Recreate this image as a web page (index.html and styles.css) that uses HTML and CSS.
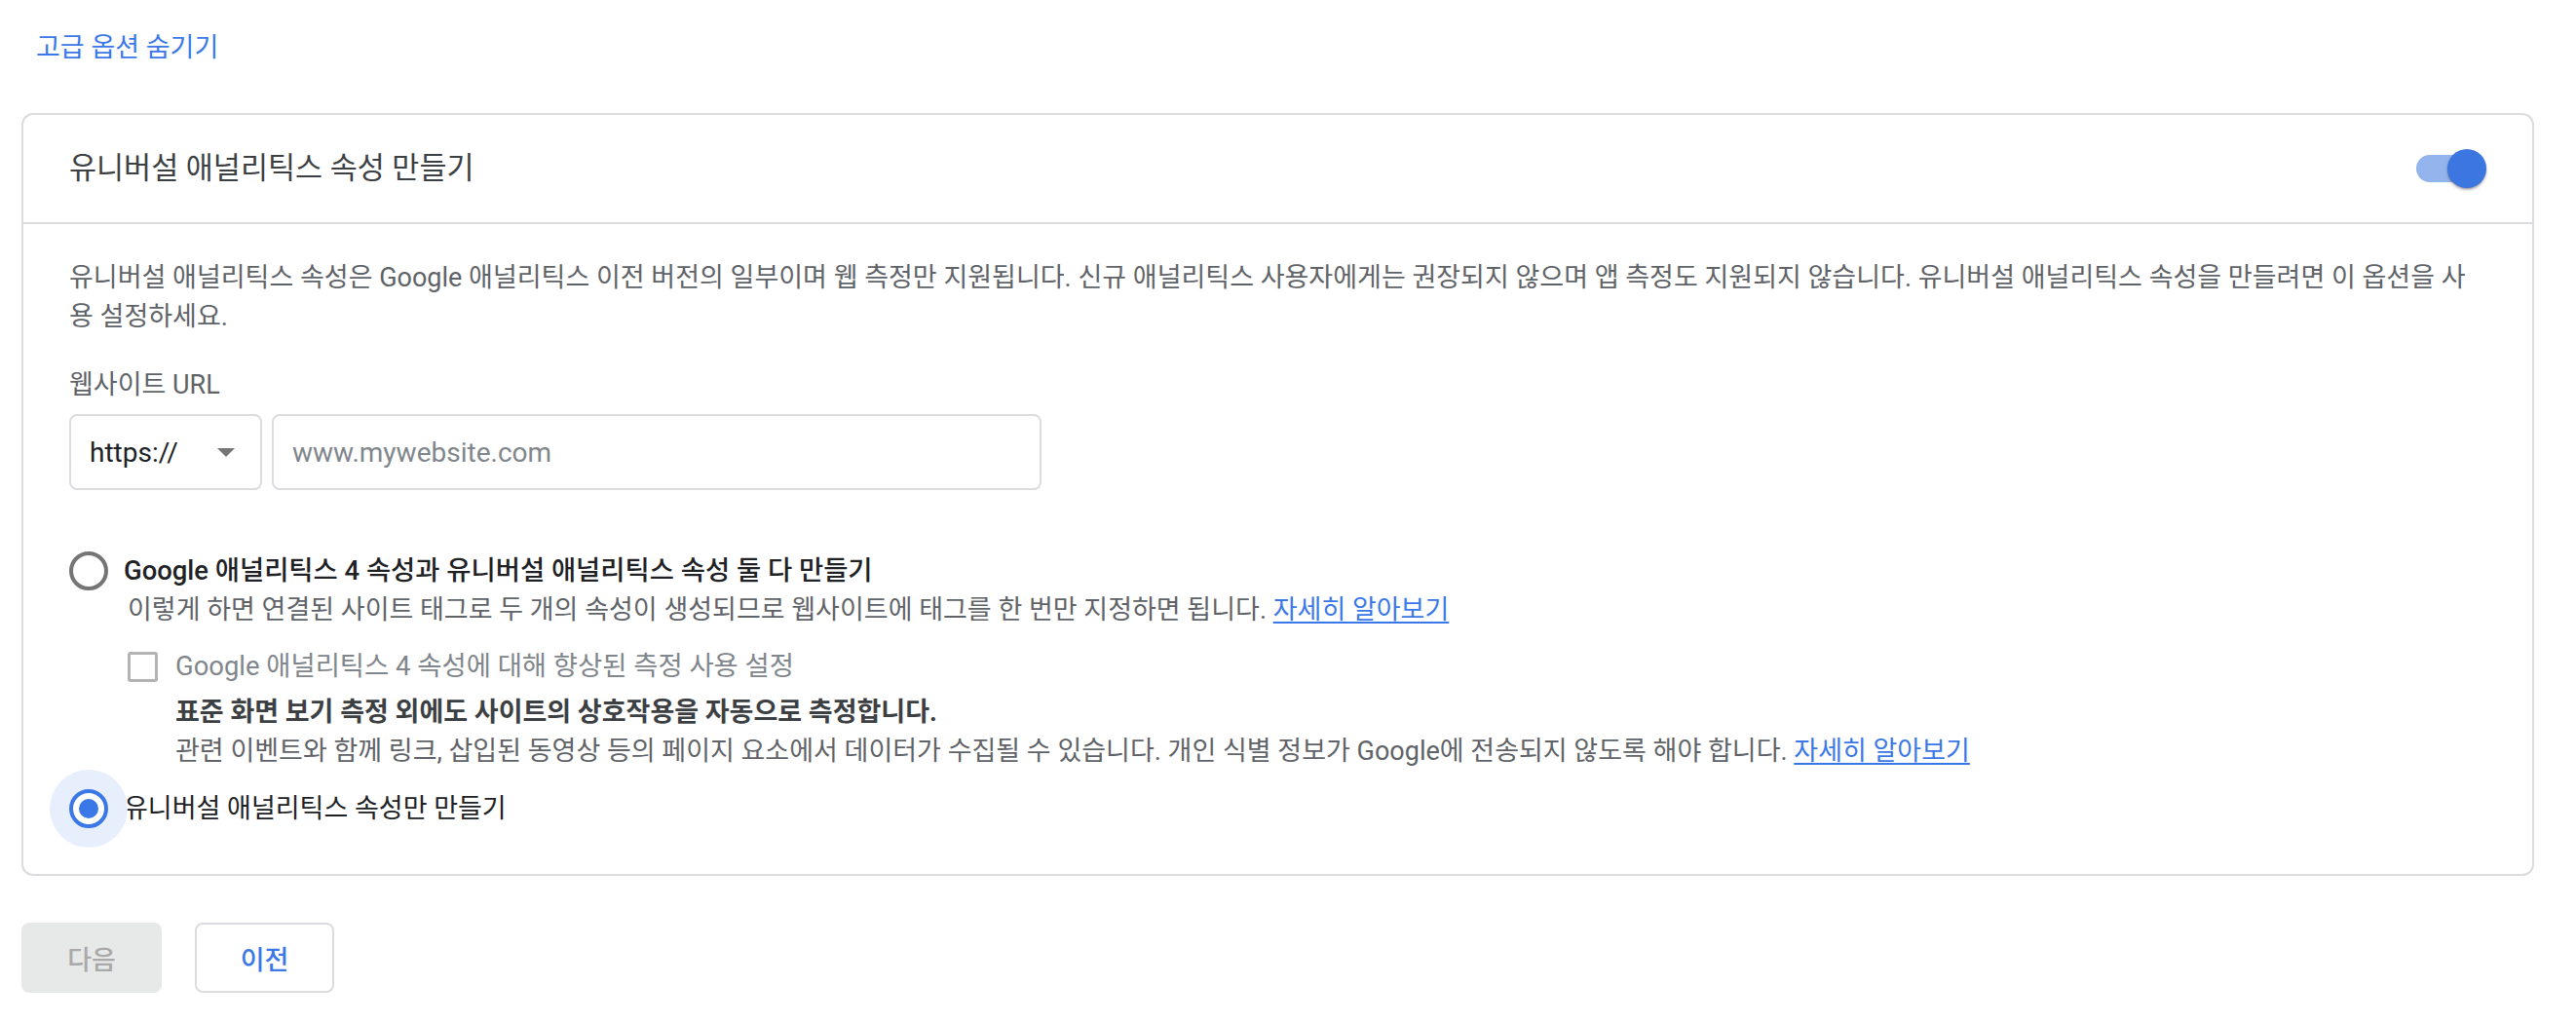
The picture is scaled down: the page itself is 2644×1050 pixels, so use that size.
FILE: index.html
```html
<!DOCTYPE html>
<html lang="ko">
<head>
<meta charset="utf-8">
<title>유니버설 애널리틱스 속성 만들기</title>
<link rel="stylesheet" href="styles.css">
</head>
<body>
<div class="page">
  <a class="adv-link" href="#">고급 옵션 숨기기</a>

  <section class="card">
    <header class="card-head">
      <h2 class="card-title">유니버설 애널리틱스 속성 만들기</h2>
      <span class="switch" role="switch" aria-checked="true">
        <span class="switch-track"></span>
        <span class="switch-thumb"></span>
      </span>
    </header>

    <div class="card-body">
      <p class="intro">유니버설 애널리틱스 속성은 Google 애널리틱스 이전 버전의 일부이며 웹 측정만 지원됩니다. 신규 애널리틱스 사용자에게는 권장되지 않으며 앱 측정도 지원되지 않습니다. 유니버설 애널리틱스 속성을 만들려면 이 옵션을 사용 설정하세요.</p>

      <label class="field-label">웹사이트 URL</label>
      <div class="url-row">
        <div class="select">
          <span class="select-value">https://</span>
          <svg class="select-arrow" width="18" height="9" viewBox="0 0 18 9"><path d="M0 0h18L9 9z"/></svg>
        </div>
        <div class="url-input"><span class="placeholder">www.mywebsite.com</span></div>
      </div>

      <div class="options">
        <div class="option">
          <span class="radio"></span>
          <span class="option-label strong-label">Google 애널리틱스 4 속성과 유니버설 애널리틱스 속성 둘 다 만들기</span>
        </div>
        <p class="option-desc">이렇게 하면 연결된 사이트 태그로 두 개의 속성이 생성되므로 웹사이트에 태그를 한 번만 지정하면 됩니다. <a href="#" class="learn">자세히 알아보기</a></p>

        <div class="check-row">
          <span class="checkbox"></span>
          <span class="check-label">Google 애널리틱스 4 속성에 대해 향상된 측정 사용 설정</span>
        </div>
        <div class="check-desc">
          <p class="check-strong">표준 화면 보기 측정 외에도 사이트의 상호작용을 자동으로 측정합니다.</p>
          <p class="check-text">관련 이벤트와 함께 링크, 삽입된 동영상 등의 페이지 요소에서 데이터가 수집될 수 있습니다. 개인 식별 정보가 Google에 전송되지 않도록 해야 합니다. <a href="#" class="learn">자세히 알아보기</a></p>
        </div>

        <div class="option option-last">
          <span class="radio checked"></span>
          <span class="option-label">유니버설 애널리틱스 속성만 만들기</span>
        </div>
      </div>
    </div>
  </section>

  <div class="actions">
    <button class="btn btn-next" disabled>다음</button>
    <button class="btn btn-prev">이전</button>
  </div>
</div>
</body>
</html>
```
FILE: styles.css
```css
html, body {
  margin: 0;
  background: #ffffff;
}

body {
  font-family: Roboto, "Noto Sans CJK KR", sans-serif;
  color: #202124;
}

.page {
  padding: 31px 43px 0 22px;
}

.adv-link {
  display: block;
  margin-left: 15px;
  font-size: 27px;
  line-height: 36px;
  color: #3b78e7;
  text-decoration: none;
}

.card {
  margin-top: 49px;
  border: 2px solid #dadce0;
  border-radius: 12px;
}

.card-head {
  height: 110px;
  padding: 0 47px;
  display: flex;
  align-items: center;
  justify-content: space-between;
  border-bottom: 2px solid #dadce0;
}

.card-title {
  margin: 0;
  font-size: 30.5px;
  font-weight: 400;
  line-height: 40px;
  color: #3c4043;
}

.switch {
  position: relative;
  display: block;
  width: 72px;
  height: 40px;
  flex: none;
}

.switch-track {
  position: absolute;
  left: 0;
  top: 6px;
  width: 68px;
  height: 28px;
  border-radius: 14px;
  background: #94b4ee;
}

.switch-thumb {
  position: absolute;
  left: 32px;
  top: 0;
  width: 40px;
  height: 40px;
  border-radius: 50%;
  background: #3b76e1;
  box-shadow: 0 2px 3px rgba(0, 0, 0, 0.28), 0 1px 1px rgba(0, 0, 0, 0.12);
}

.card-body {
  padding: 35px 47px 47px;
}

.intro {
  margin: 0;
  font-size: 27px;
  line-height: 40px;
  color: #5f6368;
}

.field-label {
  display: block;
  margin-top: 30px;
  font-size: 27px;
  line-height: 40px;
  color: #5f6368;
}

.url-row {
  display: flex;
  gap: 10px;
  margin-top: 10px;
}

.select,
.url-input {
  box-sizing: border-box;
  height: 78px;
  border: 2px solid #dadce0;
  border-radius: 8px;
  display: flex;
  align-items: center;
  font-size: 28px;
}

.select {
  width: 198px;
  padding: 0 26px 0 19px;
  justify-content: space-between;
}

.select-value {
  color: #202124;
}

.select-arrow {
  fill: #757575;
  display: block;
}

.url-input {
  width: 790px;
  padding-left: 19px;
}

.placeholder {
  color: #80868b;
}

.options {
  margin-top: 63px;
  font-size: 27px;
}

.option {
  display: flex;
  align-items: center;
  gap: 16px;
  height: 40px;
  line-height: 40px;
}

.option-last {
  margin-top: 19px;
}

.option-label {
  color: #202124;
}

.strong-label {
  font-weight: 500;
  font-size: 27.4px;
}

.radio {
  position: relative;
  flex: none;
  box-sizing: border-box;
  width: 40px;
  height: 40px;
  border: 4px solid #757575;
  border-radius: 50%;
}

.radio.checked {
  border-color: #3b78e7;
  box-shadow: 0 0 0 20px #e8effc;
}

.radio.checked::after {
  content: "";
  position: absolute;
  left: 6px;
  top: 6px;
  width: 20px;
  height: 20px;
  border-radius: 50%;
  background: #3b78e7;
}

.option-desc {
  margin: 0 0 0 60px;
  line-height: 40px;
  color: #5f6368;
}

.learn {
  color: #3b78e7;
  text-decoration: underline;
  text-underline-offset: 3px;
}

.check-row {
  display: flex;
  align-items: center;
  gap: 18px;
  height: 40px;
  margin: 18px 0 0 60px;
}

.checkbox {
  flex: none;
  box-sizing: border-box;
  width: 31px;
  height: 31px;
  border: 3px solid #b3b3b3;
  border-radius: 3px;
}

.check-label {
  font-size: 27.4px;
  line-height: 40px;
  color: #80868b;
}

.check-desc {
  margin: 7px 0 0 109px;
}

.check-desc p {
  margin: 0;
  line-height: 40px;
}

.check-strong {
  font-weight: 700;
  color: #3c4043;
}

.check-text {
  color: #5f6368;
}

.actions {
  display: flex;
  gap: 34px;
  margin-top: 48px;
}

.btn {
  box-sizing: border-box;
  height: 72px;
  border-radius: 8px;
  font-family: inherit;
  font-size: 27px;
  font-weight: 500;
  padding: 0;
  cursor: pointer;
}

.btn-next {
  width: 144px;
  border: none;
  background: #e7e8e8;
  color: #a9a9a9;
}

.btn-prev {
  width: 143px;
  border: 2px solid #dadce0;
  background: #ffffff;
  color: #3b78e7;
}
```
